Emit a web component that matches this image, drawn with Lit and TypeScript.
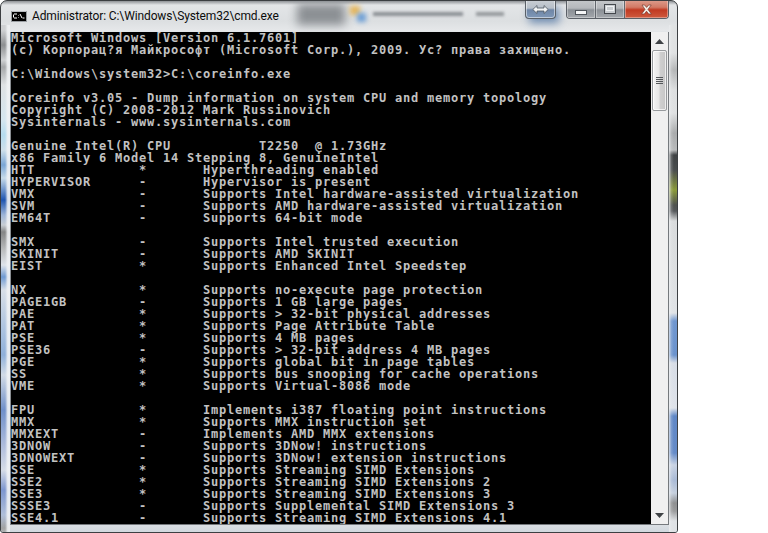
import { LitElement, html, css } from "lit";
import { customElement } from "lit/decorators.js";

const row = (name: string, flag: string, desc: string) =>
  name.padEnd(16) + flag.padEnd(8) + desc;

const LINES: string[] = [
  "Microsoft Windows [Version 6.1.7601]",
  "(c) Корпорац?я Майкрософт (Microsoft Corp.), 2009. Ус? права захищено.",
  "",
  "C:\\Windows\\system32>C:\\coreinfo.exe",
  "",
  "Coreinfo v3.05 - Dump information on system CPU and memory topology",
  "Copyright (C) 2008-2012 Mark Russinovich",
  "Sysinternals - www.sysinternals.com",
  "",
  "Genuine Intel(R) CPU           T2250  @ 1.73GHz",
  "x86 Family 6 Model 14 Stepping 8, GenuineIntel",
  row("HTT", "*", "Hyperthreading enabled"),
  row("HYPERVISOR", "-", "Hypervisor is present"),
  row("VMX", "-", "Supports Intel hardware-assisted virtualization"),
  row("SVM", "-", "Supports AMD hardware-assisted virtualization"),
  row("EM64T", "-", "Supports 64-bit mode"),
  "",
  row("SMX", "-", "Supports Intel trusted execution"),
  row("SKINIT", "-", "Supports AMD SKINIT"),
  row("EIST", "*", "Supports Enhanced Intel Speedstep"),
  "",
  row("NX", "*", "Supports no-execute page protection"),
  row("PAGE1GB", "-", "Supports 1 GB large pages"),
  row("PAE", "*", "Supports > 32-bit physical addresses"),
  row("PAT", "*", "Supports Page Attribute Table"),
  row("PSE", "*", "Supports 4 MB pages"),
  row("PSE36", "-", "Supports > 32-bit address 4 MB pages"),
  row("PGE", "*", "Supports global bit in page tables"),
  row("SS", "*", "Supports bus snooping for cache operations"),
  row("VME", "*", "Supports Virtual-8086 mode"),
  "",
  row("FPU", "*", "Implements i387 floating point instructions"),
  row("MMX", "*", "Supports MMX instruction set"),
  row("MMXEXT", "-", "Implements AMD MMX extensions"),
  row("3DNOW", "-", "Supports 3DNow! instructions"),
  row("3DNOWEXT", "-", "Supports 3DNow! extension instructions"),
  row("SSE", "*", "Supports Streaming SIMD Extensions"),
  row("SSE2", "*", "Supports Streaming SIMD Extensions 2"),
  row("SSE3", "*", "Supports Streaming SIMD Extensions 3"),
  row("SSSE3", "-", "Supports Supplemental SIMD Extensions 3"),
  row("SSE4.1", "-", "Supports Streaming SIMD Extensions 4.1"),
];

@customElement("app-root")
export class AppRoot extends LitElement {
  static styles = css`
    :host {
      display: block;
      width: 768px;
      height: 533px;
      background: #fff;
      overflow: hidden;
    }
    .window {
      position: relative;
      box-sizing: border-box;
      width: 678px;
      height: 533px;
      display: flex;
      flex-direction: column;
      overflow: hidden;
      border: 1px solid #3c3f42;
      border-radius: 7px 7px 3px 3px;
      background-color: #dfe4e8;
      background-image:
        linear-gradient(180deg, #8f9296 0, #e3e5e7 4px, #dcdfe1 20px, #e6e8ea 30px, rgba(230,232,234,0) 31px),
        linear-gradient(180deg, #dfe3e6 0, #dfe3e6 520px, #cfd6dd 533px);
    }
    .glass {
      position: absolute;
      inset: 0;
      overflow: hidden;
      pointer-events: none;
    }
    .strip-left {
      position: absolute;
      left: 0;
      top: 24px;
      bottom: 0;
      width: 9px;
      background:
        linear-gradient(90deg, rgba(240,242,244,0) 0, rgba(240,242,244,0) 45%, rgba(240,242,244,.92) 75%, rgba(240,242,244,.92) 100%),
        linear-gradient(180deg,
          #cfd1d3 5px, #8d8f91 20px, #cfd1d3 35px, #a5a7a9 42px, #dfe2e4 60px, #d5e6ef 95px,
          #b5dcef 110px, #cfe0ea 125px, #7aa6d6 140px, #c7dbea 153px, #1f55b0 175px, #9fb6d8 190px,
          #c8ced4 200px, #858686 207px, #bbbdbe 225px, #dfe4ea 240px, #6f9ad2 252px, #d8dfe8 265px,
          #8fb0da 330px, #d2dbe6 350px, #6f8fc9 385px, #aebcdc 420px,
          #d6dce6 445px, #7d96cf 465px, #b0bfd9 490px, #a2a3a3 503px, #d9dcdf 520px);
    }
    .strip-right {
      position: absolute;
      right: 0;
      top: 24px;
      bottom: 0;
      width: 8px;
      background:
        linear-gradient(90deg, rgba(236,238,240,.75) 0, rgba(236,238,240,.2) 30%, rgba(236,238,240,0) 60%),
        linear-gradient(180deg,
          #e0e2e3 0, #e0e2e3 28px, #b4b6b7 45px, #dddfe0 65px, #dfe1e2 88px, #a9abac 108px,
          #b8babb 125px, #3f4244 130px, #4a4d4e 145px, #8a9a3a 165px, #50534f 180px, #55585a 186px,
          #d9dbdc 196px, #e0e3e6 288px, #6f96cf 296px, #6b93cd 330px, #d7dde6 338px, #dfe3ea 383px,
          #5f87c6 391px, #658bc8 428px, #c9d3e3 440px, #a9bad6 455px, #c6d0de 468px, #8f9091 478px,
          #9a9b9c 486px, #dfe2e5 496px);
    }
    .blob-dark {
      position: absolute;
      left: 296px;
      top: 3px;
      width: 48px;
      height: 21px;
      background: #8b8f93;
      filter: blur(5px);
    }
    .blob-logo-a {
      position: absolute;
      left: 349px;
      top: 5px;
      width: 10px;
      height: 9px;
      background: #e6b65a;
      filter: blur(2.5px);
    }
    .blob-logo-b {
      position: absolute;
      left: 356px;
      top: 12px;
      width: 9px;
      height: 9px;
      background: #6d9fd6;
      filter: blur(2.5px);
    }
    .blob-text-a {
      position: absolute;
      left: 372px;
      top: 11px;
      width: 90px;
      height: 4px;
      background: #8b8f94;
      filter: blur(1.5px);
    }
    .blob-text-b {
      position: absolute;
      left: 475px;
      top: 11px;
      width: 28px;
      height: 4px;
      background: #94989c;
      filter: blur(1.5px);
    }
    .blob-shade {
      position: absolute;
      left: 528px;
      top: 6px;
      width: 30px;
      height: 16px;
      background: #6e8bb0;
      filter: blur(4px);
    }
    .titlebar {
      position: relative;
      flex: none;
      height: 31px;
      display: flex;
      align-items: flex-start;
      padding-left: 10px;
      box-sizing: border-box;
    }
    .app-icon {
      flex: none;
      width: 16px;
      height: 11px;
      margin-top: 10px;
      display: block;
    }
    .title {
      margin: 5px 0 0 5px;
      font: 12px/20px Roboto, "Open Sans", sans-serif;
      letter-spacing: -0.12px;
      color: #0c0c0c;
      white-space: nowrap;
      flex: 1;
    }
    .restore {
      flex: none;
      box-sizing: border-box;
      width: 31px;
      height: 19px;
      margin-top: -1px;
      margin-right: 10px;
      border: 1px solid #5a6068;
      border-top: none;
      border-radius: 0 0 4px 4px;
      box-shadow: inset 0 0 0 1px rgba(255,255,255,.5);
      background: linear-gradient(180deg, #c9ced4 0, #b7bfc9 45%, #6f86a6 55%, #7f98b8 100%);
      display: flex;
      align-items: center;
      justify-content: center;
    }
    .caption {
      flex: none;
      display: flex;
      height: 19px;
      width: 103px;
      margin-top: -1px;
      margin-right: 8px;
      box-sizing: border-box;
      border: 1px solid #5a5f66;
      border-top: none;
      border-radius: 0 0 4px 4px;
      overflow: hidden;
    }
    .cbtn {
      display: flex;
      align-items: center;
      justify-content: center;
      height: 100%;
      box-shadow: inset 0 0 0 1px rgba(255,255,255,.35);
    }
    .min, .max {
      width: 28px;
      border-right: 1px solid #62676d;
      background: linear-gradient(180deg, #c4c7ca 0, #b5b8bc 45%, #8b9096 55%, #a3a7ac 100%);
    }
    .close {
      flex: 1;
      background: linear-gradient(180deg, #dd9d8d 0, #d27a66 40%, #c13a22 55%, #cf5a3e 100%);
    }
    .body {
      position: relative;
      flex: 1;
      min-height: 0;
      display: flex;
      margin: 0 8px 7px 9px;
      border: 1px solid #75797d;
      border-top: none;
      border-left-color: #8a8e92;
    }
    .console {
      flex: 1;
      min-width: 0;
      margin: 0;
      background: #000;
      color: #c2c2c2;
      font-family: "DejaVu Sans Mono", monospace;
      font-size: 12px;
      font-weight: bold;
      letter-spacing: 0.776px;
      line-height: 12px;
      overflow: hidden;
      white-space: pre;
    }
    .scrollbar {
      flex: none;
      width: 17px;
      background: #f0f0f0;
      display: flex;
      flex-direction: column;
      align-items: center;
    }
    .arrow {
      flex: none;
      height: 18px;
      width: 100%;
      display: flex;
      align-items: center;
      justify-content: center;
    }
    .thumb {
      flex: none;
      box-sizing: border-box;
      width: 15px;
      height: 61px;
      border: 1px solid #979a9d;
      border-radius: 2px;
      background: linear-gradient(90deg, #f4f4f4 0, #e6e6e6 45%, #cfcfcf 55%, #c6c6c6 100%);
      box-shadow: inset 0 0 0 1px rgba(255,255,255,.7);
      display: flex;
      align-items: center;
      justify-content: center;
    }
    .track { flex: 1; }
  `;

  render() {
    return html`
      <div class="window">
        <div class="glass">
          <div class="strip-left"></div>
          <div class="strip-right"></div>
          <div class="blob-dark"></div>
          <div class="blob-logo-a"></div>
          <div class="blob-logo-b"></div>
          <div class="blob-text-a"></div>
          <div class="blob-text-b"></div>
          <div class="blob-shade"></div>
        </div>
        <div class="titlebar">
          <svg class="app-icon" viewBox="0 0 16 11">
            <rect width="16" height="11" fill="#000"/>
            <rect width="16" height="1" fill="#b8bcc0"/>
            <rect y="0" width="1" height="11" fill="#9a9ea2"/>
            <rect x="15" y="0" width="1" height="11" fill="#9a9ea2"/>
            <rect y="10" width="16" height="1" fill="#9a9ea2"/>
            <path d="M3 3h3M2.500 3.500v3M3 7h3M7.500 4v.5M7.500 6.500v.5M9 3l2 4M11.500 7h2" stroke="#fff" stroke-width="1" fill="none"/>
          </svg>
          <div class="title">Administrator: C:\\Windows\\System32\\cmd.exe</div>
          <div class="restore">
            <svg width="17" height="11" viewBox="0 0 17 11">
              <path d="M0.800 5.500 5 1.500v2.500h7V1.500l4.200 4-4.200 4V7H5v2.500z" fill="#f2f4f6" stroke="#4c5560" stroke-width="0.8"/>
            </svg>
          </div>
          <div class="caption">
            <div class="cbtn min">
              <svg width="12" height="14" viewBox="0 0 12 14">
                <rect x="0.5" y="8.500" width="11" height="4" fill="#f4f5f6" stroke="#50555b"/>
              </svg>
            </div>
            <div class="cbtn max">
              <svg width="12" height="10" viewBox="0 0 12 10">
                <rect x="0.5" y="0.5" width="11" height="9" fill="#c8ccd0" stroke="#44484d"/>
                <rect x="2.500" y="2.500" width="7" height="4" fill="#c8ccd0" stroke="#eef0f2"/>
              </svg>
            </div>
            <div class="cbtn close">
              <svg width="13" height="11" viewBox="0 0 13 11">
                <path d="M2 1h2.600l2 2.400 2-2.400H11.200L8 5.400l3.400 4.600H8.700L6.500 7.200 4.300 10H1.600l3.400-4.600z" fill="#f3efe8" stroke="#7a3a30" stroke-width="0.7"/>
              </svg>
            </div>
          </div>
        </div>
        <div class="body">
          <pre class="console">${LINES.join("\n")}</pre>
          <div class="scrollbar">
            <div class="arrow">
              <svg width="9" height="5" viewBox="0 0 9 5"><path d="M4.500 0 9 5H0z" fill="#3f4245"/></svg>
            </div>
            <div class="thumb">
              <svg width="9" height="10" viewBox="0 0 9 10">
                <path d="M1 1.500h7M1 3.500h7M1 5.500h7M1 7.500h7" stroke="#54575a" stroke-width="1" fill="none"/>
              </svg>
            </div>
            <div class="track"></div>
            <div class="arrow">
              <svg width="9" height="5" viewBox="0 0 9 5"><path d="M0 0h9L4.500 5z" fill="#3f4245"/></svg>
            </div>
          </div>
        </div>
      </div>
    `;
  }
}
